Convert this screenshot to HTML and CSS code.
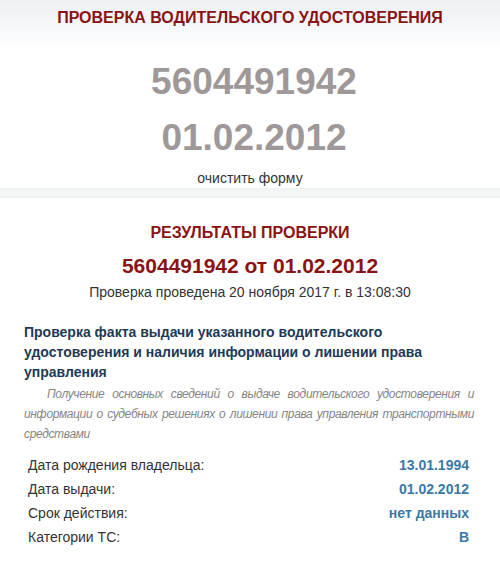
FILE: index.html
```html
<!DOCTYPE html>
<html lang="ru">
<head>
<meta charset="utf-8">
<title>Проверка водительского удостоверения</title>
<link rel="stylesheet" href="styles.css">
</head>
<body>
<header class="page-head">
  <h1 class="page-title">ПРОВЕРКА ВОДИТЕЛЬСКОГО УДОСТОВЕРЕНИЯ</h1>
</header>
<section class="form">
  <div class="form-value">5604491942</div>
  <div class="form-value">01.02.2012</div>
  <a class="form-clear" href="#">очистить форму</a>
</section>
<div class="band"></div>
<section class="results">
  <h2 class="results-title">РЕЗУЛЬТАТЫ ПРОВЕРКИ</h2>
  <div class="results-doc">5604491942 от 01.02.2012</div>
  <div class="results-time">Проверка проведена 20 ноября 2017 г. в 13:08:30</div>
  <div class="check">
    <h3 class="check-title">Проверка факта выдачи указанного водительского удостоверения и наличия информации о лишении права управления</h3>
    <p class="check-desc">Получение основных сведений о выдаче водительского удостоверения и информации о судебных решениях о лишении права управления транспортными средствами</p>
    <dl class="facts">
      <div class="fact"><dt>Дата рождения владельца:</dt><dd>13.01.1994</dd></div>
      <div class="fact"><dt>Дата выдачи:</dt><dd>01.02.2012</dd></div>
      <div class="fact"><dt>Срок действия:</dt><dd>нет данных</dd></div>
      <div class="fact"><dt>Категории ТС:</dt><dd>B</dd></div>
    </dl>
  </div>
</section>
</body>
</html>
```
FILE: styles.css
```css
html, body {
  margin: 0;
  padding: 0;
  background: #fff;
}
body {
  font-family: "Liberation Sans", Arial, sans-serif;
  color: #333;
  width: 500px;
}
.page-head {
  height: 50px;
  box-sizing: border-box;
  padding-top: 8px;
  background: linear-gradient(#edf1f4 0%, #f5f8fa 50%, #fbfcfd 85%, #fff 100%);
}
.page-title {
  margin: 0;
  text-align: center;
  font-size: 16px;
  line-height: 20px;
  font-weight: bold;
  color: #8a1414;
}
.form {
  padding-top: 4px;
  padding-bottom: 1px;
  text-align: center;
}
.form-value {
  padding-left: 8px;
  font-size: 37px;
  line-height: 56px;
  font-weight: bold;
  color: #9f9899;
}
.form-clear {
  display: block;
  margin-top: 4px;
  font-size: 14px;
  line-height: 17px;
  color: #333;
  text-decoration: none;
}
.band {
  height: 10px;
  background: linear-gradient(#eff2f2, #f6f8f8 50%, #eff2f2);
}
.results {
  padding-top: 25px;
  text-align: center;
}
.results-title {
  margin: 0;
  font-size: 16px;
  line-height: 20px;
  font-weight: bold;
  color: #8a1414;
}
.results-doc {
  margin-top: 9px;
  font-size: 21px;
  line-height: 28px;
  font-weight: bold;
  color: #8a1414;
}
.results-time {
  margin-top: 4px;
  font-size: 14px;
  line-height: 17px;
  color: #333;
}
.check {
  margin: 21px 24px 0;
  text-align: left;
}
.check-title {
  margin: 0;
  font-size: 14px;
  line-height: 20px;
  font-weight: bold;
  color: #1e3a56;
}
.check-desc {
  margin: 2px 2px 0 0;
  font-size: 12px;
  line-height: 20px;
  font-style: italic;
  letter-spacing: -0.35px;
  color: #858585;
  text-align: justify;
  text-indent: 23px;
}
.facts {
  margin: 9px 7px 0 4px;
  padding: 0;
}
.fact {
  display: flex;
  justify-content: space-between;
  font-size: 14px;
  line-height: 24px;
}
.fact dt {
  margin: 0;
  color: #333;
}
.fact dd {
  margin: 0;
  font-weight: bold;
  color: #3b78a7;
}
```
